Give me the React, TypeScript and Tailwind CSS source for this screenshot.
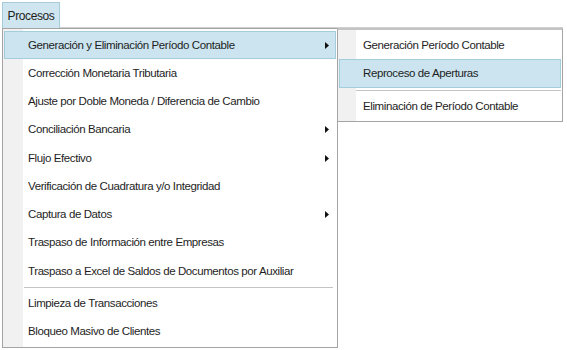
import React from "react"

type Item = { label: string; sub?: boolean; active?: boolean } | "sep"

const mainItems: Item[] = [
  { label: "Generación y Eliminación Período Contable", sub: true, active: true },
  { label: "Corrección Monetaria Tributaria" },
  { label: "Ajuste por Doble Moneda / Diferencia de Cambio" },
  { label: "Conciliación Bancaria", sub: true },
  { label: "Flujo Efectivo", sub: true },
  { label: "Verificación de Cuadratura y/o Integridad" },
  { label: "Captura de Datos", sub: true },
  { label: "Traspaso de Información entre Empresas" },
  { label: "Traspaso a Excel de Saldos de Documentos por Auxiliar" },
  "sep",
  { label: "Limpieza de Transacciones" },
  { label: "Bloqueo Masivo de Clientes" },
]

const subItems: Item[] = [
  { label: "Generación Período Contable" },
  { label: "Reproceso de Aperturas", active: true },
  "sep",
  { label: "Eliminación de Período Contable" },
]

function Arrow() {
  return (
    <svg width="4" height="7" viewBox="0 0 4 7" className="mr-[6px]">
      <path d="M0 0 L4 3.5 L0 7 Z" fill="#111" />
    </svg>
  )
}

function MenuRow({ item, gutter }: { item: Exclude<Item, "sep">; gutter: string }) {
  return (
    <div
      className={`relative flex h-[28.25px] items-center border ${
        item.active ? "border-[#a3cddd] bg-[#cbe4ef]" : "border-transparent"
      }`}
    >
      <span className={`${gutter} flex-1 whitespace-nowrap`}>{item.label}</span>
      {item.sub && <Arrow />}
    </div>
  )
}

export default function App() {
  return (
    <div className="h-[350px] w-[567px] bg-white font-['Liberation_Sans',Arial,sans-serif] text-[11.5px] tracking-[-0.4px] text-[#1e1e1e]">
      {/* menu bar */}
      <div className="flex items-end pl-[2px] pt-[2px]">
        <div className="flex h-[26px] w-[58px] items-center justify-center border border-b-0 border-[#a6cbd9] bg-[#cfe6f0] text-[12px]">
          Procesos
        </div>
        <div className="mb-[-1px] h-[2px] w-[503px] bg-[#cfcfcf]" />
      </div>

      <div className="flex items-start pl-[2px]">
        {/* main dropdown */}
        <div className="w-[336px] border border-[#a4a4a4] bg-[linear-gradient(to_right,#f1f1f1_20px,#fff_20px)] px-[1px] pb-[1px] pt-[2px]">
          {mainItems.map((item, i) =>
            item === "sep" ? (
              <div key={i} className="flex h-[4px] items-center pl-[20px] pr-[3px]">
                <div className="h-[1px] w-full bg-[#c4c4c4]" />
              </div>
            ) : (
              <MenuRow key={i} item={item} gutter="pl-[23px]" />
            ),
          )}
        </div>

        {/* submenu */}
        <div className="w-[226px] -ml-[1px] border border-t-2 border-[#a4a4a4] border-t-[#c4c4c4] bg-[linear-gradient(to_right,#f1f1f1_18px,#fff_18px)] px-[1px] pt-[1px]">
          {subItems.map((item, i) =>
            item === "sep" ? (
              <div key={i} className="flex h-[5px] items-center pl-[17px]">
                <div className="h-[1px] w-full bg-[#c4c4c4]" />
              </div>
            ) : (
              <MenuRow key={i} item={item} gutter="pl-[23px]" />
            ),
          )}
        </div>
      </div>
    </div>
  )
}
